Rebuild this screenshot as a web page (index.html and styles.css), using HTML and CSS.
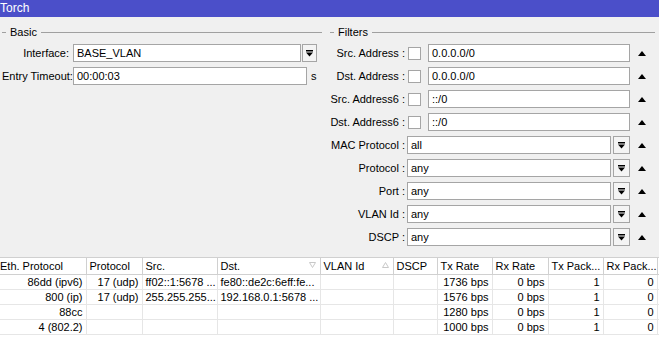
FILE: index.html
```html
<!DOCTYPE html>
<html lang="en">
<head>
    <meta charset="UTF-8">
    <title>Torch</title>
    <link rel="stylesheet" href="styles.css">
</head>
<body>
<div class="window">
    <div class="titlebar">Torch</div>

    <div class="panes">
        <!-- Basic -->
        <section class="group basic">
            <div class="group-title"><span class="dash"></span><span>Basic</span><span class="rule"></span></div>
            <div class="form basic-form">
                <label>Interface:</label>
                <div class="field">
                    <div class="box">BASE_VLAN</div>
                    <span class="drop small"><svg width="7" height="7" viewBox="0 0 7 7"><rect x="0" y="0" width="7" height="1.5" fill="#000"/><path d="M0 2.5h7L3.5 6.5z" fill="#000"/></svg></span>
                </div>
                <label>Entry Timeout:</label>
                <div class="field">
                    <div class="box">00:00:03</div>
                    <span class="unit">s</span>
                </div>
            </div>
        </section>

        <!-- Filters -->
        <section class="group filters">
            <div class="group-title"><span class="dash"></span><span>Filters</span><span class="rule"></span></div>
            <div class="form filter-form">
                <label>Src. Address :</label>
                <div class="field"><span class="check"></span><div class="box">0.0.0.0/0</div></div>
                <span class="up"></span>

                <label>Dst. Address :</label>
                <div class="field"><span class="check"></span><div class="box">0.0.0.0/0</div></div>
                <span class="up"></span>

                <label>Src. Address6 :</label>
                <div class="field"><span class="check"></span><div class="box">::/0</div></div>
                <span class="up"></span>

                <label>Dst. Address6 :</label>
                <div class="field"><span class="check"></span><div class="box">::/0</div></div>
                <span class="up"></span>

                <label>MAC Protocol :</label>
                <div class="field"><div class="box">all</div><span class="drop"><svg width="7" height="7" viewBox="0 0 7 7"><rect x="0" y="0" width="7" height="1.5" fill="#000"/><path d="M0 2.5h7L3.5 6.5z" fill="#000"/></svg></span></div>
                <span class="up"></span>

                <label>Protocol :</label>
                <div class="field"><div class="box">any</div><span class="drop"><svg width="7" height="7" viewBox="0 0 7 7"><rect x="0" y="0" width="7" height="1.5" fill="#000"/><path d="M0 2.5h7L3.5 6.5z" fill="#000"/></svg></span></div>
                <span class="up"></span>

                <label>Port :</label>
                <div class="field"><div class="box">any</div><span class="drop"><svg width="7" height="7" viewBox="0 0 7 7"><rect x="0" y="0" width="7" height="1.5" fill="#000"/><path d="M0 2.5h7L3.5 6.5z" fill="#000"/></svg></span></div>
                <span class="up"></span>

                <label>VLAN Id :</label>
                <div class="field"><div class="box">any</div><span class="drop"><svg width="7" height="7" viewBox="0 0 7 7"><rect x="0" y="0" width="7" height="1.5" fill="#000"/><path d="M0 2.5h7L3.5 6.5z" fill="#000"/></svg></span></div>
                <span class="up"></span>

                <label>DSCP :</label>
                <div class="field"><div class="box">any</div><span class="drop"><svg width="7" height="7" viewBox="0 0 7 7"><rect x="0" y="0" width="7" height="1.5" fill="#000"/><path d="M0 2.5h7L3.5 6.5z" fill="#000"/></svg></span></div>
                <span class="up"></span>
            </div>
        </section>
    </div>

    <!-- Results -->
    <div class="results">
        <table class="grid">
            <colgroup>
                <col style="width:86px"><col style="width:56px"><col style="width:75px"><col style="width:103px">
                <col style="width:73px"><col style="width:44px"><col style="width:55px"><col style="width:56px">
                <col style="width:55px"><col style="width:54px"><col>
            </colgroup>
            <thead>
                <tr>
                    <th class="first">Eth. Protocol</th>
                    <th>Protocol</th>
                    <th>Src.</th>
                    <th class="sorted">Dst.<svg class="sort" width="7" height="6" viewBox="0 0 7 6"><path d="M0.5 0.5h6L3.5 5.5z" fill="none" stroke="#c8c8c8"/></svg></th>
                    <th class="sorted">VLAN Id<svg class="sort" width="7" height="6" viewBox="0 0 7 6"><path d="M0.5 5.5h6L3.5 0.5z" fill="none" stroke="#c8c8c8"/></svg></th>
                    <th>DSCP</th>
                    <th>Tx Rate</th>
                    <th>Rx Rate</th>
                    <th>Tx Pack...</th>
                    <th>Rx Pack...</th>
                    <th class="filler"></th>
                </tr>
            </thead>
            <tbody>
                <tr>
                    <td class="num">86dd (ipv6)</td><td class="num">17 (udp)</td><td>ff02::1:5678 ...</td><td>fe80::de2c:6eff:fe...</td>
                    <td></td><td></td><td class="num">1736 bps</td><td class="num">0 bps</td><td class="num">1</td><td class="num">0</td><td class="filler"></td>
                </tr>
                <tr>
                    <td class="num">800 (ip)</td><td class="num">17 (udp)</td><td>255.255.255...</td><td>192.168.0.1:5678 ...</td>
                    <td></td><td></td><td class="num">1576 bps</td><td class="num">0 bps</td><td class="num">1</td><td class="num">0</td><td class="filler"></td>
                </tr>
                <tr>
                    <td class="num">88cc</td><td></td><td></td><td></td>
                    <td></td><td></td><td class="num">1280 bps</td><td class="num">0 bps</td><td class="num">1</td><td class="num">0</td><td class="filler"></td>
                </tr>
                <tr>
                    <td class="num">4 (802.2)</td><td></td><td></td><td></td>
                    <td></td><td></td><td class="num">1000 bps</td><td class="num">0 bps</td><td class="num">1</td><td class="num">0</td><td class="filler"></td>
                </tr>
            </tbody>
        </table>
    </div>
</div>
</body>
</html>
```

FILE: styles.css
```css
html, body {
    margin: 0;
    padding: 0;
    height: 100%;
}

body {
    font-family: "Liberation Sans", Arial, sans-serif;
    font-size: 11px;
    color: #000;
    background-color: #f0f0f0;
}

.window {
    display: flex;
    flex-direction: column;
    height: 100%;
}

.titlebar {
    height: 17px;
    line-height: 17px;
    background-color: #4b4fc9;
    color: #fff;
    font-size: 12px;
}

.panes {
    display: flex;
    gap: 8px;
    padding: 8px 4px 0 2px;
}

.group.basic {
    width: 320px;
}

.group.filters {
    flex: 1;
}

.group-title {
    display: flex;
    align-items: center;
    height: 14px;
    gap: 4px;
}

.dash {
    width: 4px;
    border-top: 1px solid #a0a0a0;
}

.rule {
    flex: 1;
    border-top: 1px solid #a0a0a0;
}

.form {
    display: grid;
    row-gap: 5px;
    margin-top: 5px;
    align-items: center;
}

.basic-form {
    grid-template-columns: 67px 244px;
    column-gap: 4px;
}

.filter-form {
    grid-template-columns: 75px 223px 18px;
    column-gap: 2px;
}

label {
    text-align: right;
    white-space: nowrap;
}

.field {
    display: flex;
    align-items: center;
    height: 18px;
    gap: 2px;
}

.box {
    flex: 1;
    height: 16px;
    line-height: 16px;
    background: #fff;
    border: 1px solid #a5a5a5;
    padding-left: 3px;
    white-space: nowrap;
    overflow: hidden;
}

.drop {
    display: flex;
    align-items: center;
    justify-content: center;
    box-sizing: border-box;
    height: 18px;
    width: 17px;
    border: 1px solid #a5a5a5;
    background: #f4f4f4;
}

.drop.small {
    width: 15px;
    margin-left: -1px;
}

.unit {
    width: 6px;
    margin-left: 2px;
}

.check {
    width: 11px;
    height: 11px;
    background: #fff;
    border: 1px solid #a5a5a5;
    margin: 0 5px 0 1px;
}

.up {
    width: 0;
    height: 0;
    border-left: 4px solid transparent;
    border-right: 4px solid transparent;
    border-bottom: 5px solid #000;
    margin-left: 6px;
}

.results {
    flex: 1;
    margin-top: 11px;
    background: #fff;
}

.grid {
    width: 100%;
    table-layout: fixed;
    border-collapse: collapse;
}

.grid th {
    height: 16px;
    font-weight: normal;
    text-align: left;
    padding: 0 3px;
    border-top: 1px solid #d0d0d0;
    border-bottom: 1px solid #d0d0d0;
    border-right: 1px solid #d0d0d0;
    white-space: nowrap;
    overflow: hidden;
    position: relative;
}

.grid th.first {
    padding-left: 0;
}

.grid th.sorted .sort {
    position: absolute;
    right: 4px;
    top: 4px;
}

.grid td {
    height: 14px;
    line-height: 14px;
    padding: 0 3px;
    border-bottom: 1px solid #e6e6e6;
    border-right: 1px solid #e6e6e6;
    white-space: nowrap;
    overflow: hidden;
}

.grid td.num {
    text-align: right;
}

.grid .filler {
    border-right: none;
}
```
